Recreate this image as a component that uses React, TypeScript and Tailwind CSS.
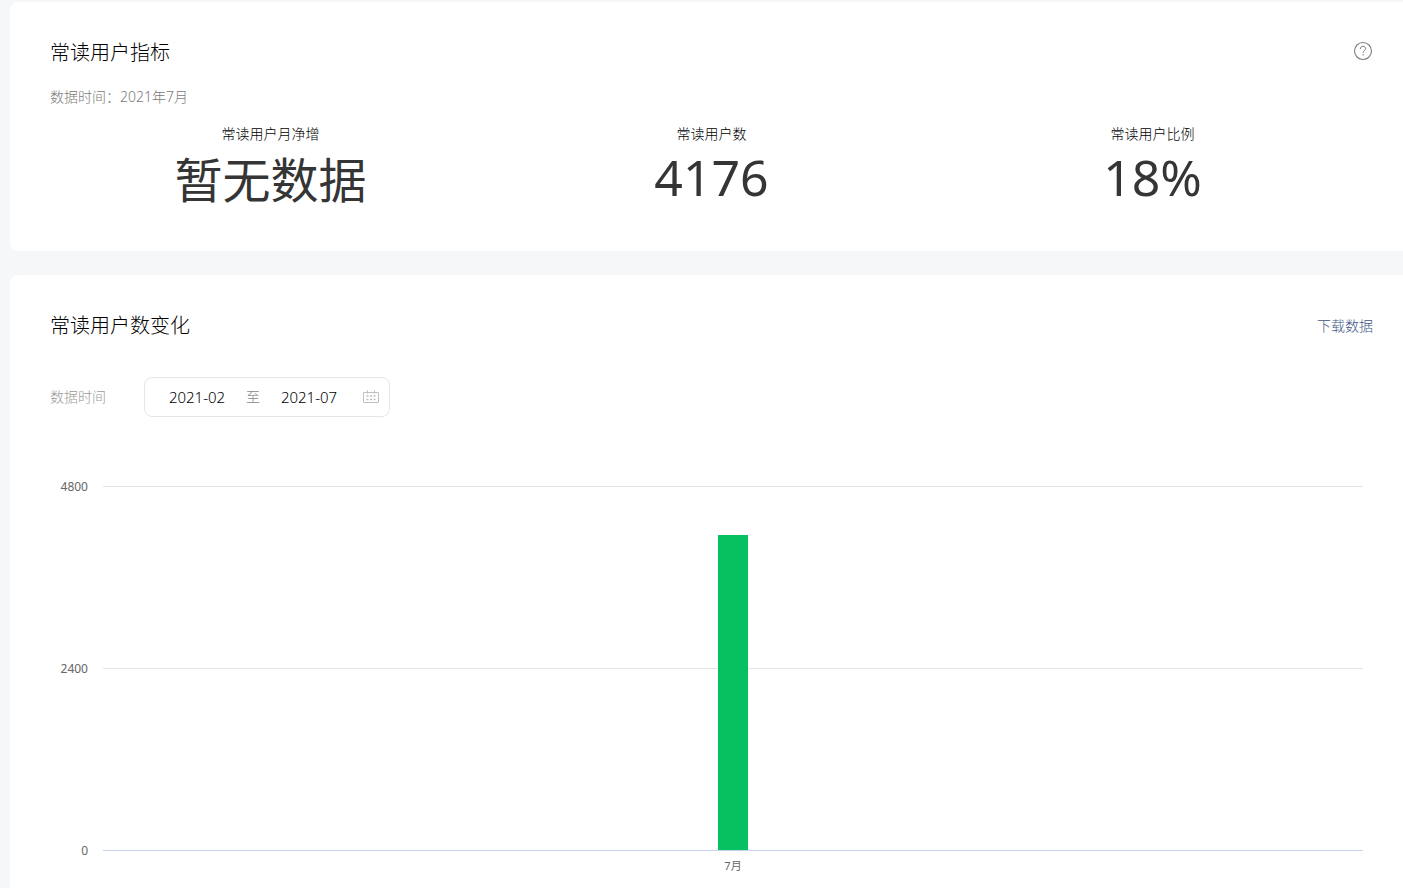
import { useState } from 'react'

interface Metric {
  label: string
  value: string
  numeric: boolean
}

const metrics: Metric[] = [
  { label: '常读用户月净增', value: '暂无数据', numeric: false },
  { label: '常读用户数', value: '4176', numeric: true },
  { label: '常读用户比例', value: '18%', numeric: true },
]

const ticks = ['4800', '2400', '0']

const HelpIcon = () => (
  <svg width="20" height="20" viewBox="0 0 20 20" fill="none" stroke="#7d7d7d" aria-hidden="true">
    <circle cx="10" cy="10" r="8.5" strokeWidth="1.1" />
    <path d="M7.3 8c0-1.6 1.1-2.7 2.7-2.7s2.7 1 2.7 2.4c0 1.8-2.6 2-2.6 4.1" strokeWidth="1" />
    <path d="M10.1 13.3v1.3" strokeWidth="1.2" />
  </svg>
)

const CalendarIcon = () => (
  <svg width="16" height="14" viewBox="0 0 16 14" fill="none" stroke="#bfbfbf" aria-hidden="true">
    <rect x="0.5" y="2.5" width="15" height="10" rx="0.5" />
    <path d="M4.5 0.5v3M11.5 0.5v3" />
    <path d="M3.5 6h2M7 6h2M10.5 6h2M3.5 9.5h2M7 9.5h2M10.5 9.5h2" strokeWidth="1.6" />
  </svg>
)

const MetricsCard = () => (
  <section className="rounded-l-lg bg-white pt-[37px] pr-[30px] pb-[37px] pl-10">
    <div className="flex h-7 items-center justify-between">
      <h2 className="text-xl font-light text-black">常读用户指标</h2>
      <button type="button" aria-label="帮助" className="mb-1">
        <HelpIcon />
      </button>
    </div>
    <p className="mt-5 text-sm font-light text-[#7a7a7a]">数据时间：2021年7月</p>
    <dl className="mt-[15px] grid grid-cols-3 text-center text-[#353535]">
      {metrics.map((metric) => (
        <div key={metric.label}>
          <dt className="text-sm leading-6 font-light text-black">{metric.label}</dt>
          <dd className={metric.numeric ? 'text-[50px] leading-[62px]' : 'text-5xl leading-[68px]'}>
            {metric.value}
          </dd>
        </div>
      ))}
    </dl>
  </section>
)

const DateRange = () => {
  const [start, setStart] = useState('2021-02')
  const [end, setEnd] = useState('2021-07')

  return (
    <div className="mt-[37px] flex items-center">
      <label htmlFor="start-month" className="w-[94px] text-sm font-light text-[#9a9a9a]">
        数据时间
      </label>
      <div className="flex h-10 items-center rounded-lg border border-[#e4e6e9] pr-[10px] pl-[3px]">
        <input
          id="start-month"
          type="text"
          value={start}
          onChange={(e) => setStart(e.target.value)}
          className="w-[98px] text-center text-[15px] font-light text-black outline-none"
        />
        <span className="text-sm font-light text-[#8a8a8a]">至</span>
        <input
          type="text"
          aria-label="结束月份"
          value={end}
          onChange={(e) => setEnd(e.target.value)}
          className="mr-[5px] w-[98px] text-center text-[15px] font-light text-black outline-none"
        />
        <CalendarIcon />
      </div>
    </div>
  )
}

const BarChart = () => (
  <div className="mt-[69px] flex pr-[10px]">
    <div className="-mt-[7px] flex h-[380px] w-[38px] flex-col justify-between text-right text-xs text-[#666666]">
      {ticks.map((tick) => (
        <span key={tick}>{tick}</span>
      ))}
    </div>
    <div className="ml-[15px] flex-1">
      <div className="relative border-b border-[#c5d3ec]">
        <div className="h-[182px] border-t border-[#e4e4e4]" />
        <div className="h-[182px] border-t border-[#e4e4e4]" />
        <div className="absolute inset-x-0 bottom-0 flex justify-center">
          <div className="h-[315px] w-[30px] bg-[#07c160]" />
        </div>
      </div>
      <p className="mt-[7px] text-center text-[11px] leading-4 text-[#666666]">7月</p>
    </div>
  </div>
)

const TrendCard = () => (
  <section className="grow rounded-tl-lg bg-white pt-[37px] pr-[30px] pb-3 pl-10">
    <div className="flex h-7 items-center justify-between">
      <h2 className="text-xl font-light text-black">常读用户数变化</h2>
      <a href="#download" className="text-sm font-light text-[#3d5384]">
        下载数据
      </a>
    </div>
    <DateRange />
    <BarChart />
  </section>
)

const App = () => {
  return (
    <main className="flex min-h-screen flex-col gap-6 bg-[#f6f7f9] pt-[2px] pl-[10px] font-['Noto_Sans','Noto_Sans_CJK_SC',sans-serif]">
      <MetricsCard />
      <TrendCard />
    </main>
  )
}

export default App
